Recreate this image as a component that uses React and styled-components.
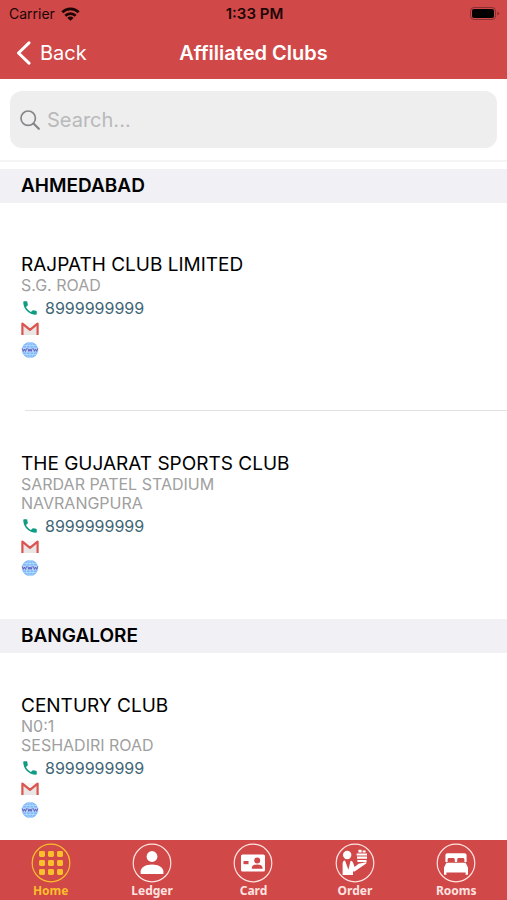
import { useState } from "react";
import styled, { createGlobalStyle } from "styled-components";

const SECTIONS = [
  {
    city: "AHMEDABAD",
    clubs: [
      {
        name: "RAJPATH CLUB LIMITED",
        address: ["S.G. ROAD"],
        phone: "8999999999"
      },
      {
        name: "THE GUJARAT SPORTS CLUB",
        address: ["SARDAR PATEL STADIUM", "NAVRANGPURA"],
        phone: "8999999999"
      }
    ]
  },
  {
    city: "BANGALORE",
    clubs: [
      {
        name: "CENTURY CLUB",
        address: ["N0:1", "SESHADIRI ROAD"],
        phone: "8999999999"
      }
    ]
  }
];

const WifiIcon = () => (
  <svg width="19" height="14" viewBox="0 0 18 14" aria-hidden="true">
    <g fill="none" stroke="#1c0606" strokeWidth="2.7">
      <path d="M0.8 5.2a11.6 11.6 0 0 1 16.4 0" />
      <path d="M3.8 8.8a7.4 7.4 0 0 1 10.4 0" />
    </g>
    <path d="M9 13.8 5.9 10.9a4.4 4.4 0 0 1 6.2 0z" fill="#1c0606" />
  </svg>
);

const BatteryIcon = () => (
  <svg width="30" height="14" viewBox="0 0 30 14" aria-hidden="true">
    <rect
      x="0.5"
      y="0.5"
      width="25"
      height="12"
      rx="3.5"
      fill="none"
      stroke="#8c2f30"
    />
    <rect x="2" y="2" width="22" height="9" rx="2" fill="#000" />
    <path d="M27.2 4.5v4q2-.8 2-2t-2-2z" fill="#8c2f30" />
  </svg>
);

const BackIcon = () => (
  <svg width="15" height="24" viewBox="0 0 15 24" aria-hidden="true">
    <path
      d="M13 1.8 2.5 12 13 22.2"
      fill="none"
      stroke="#fff"
      strokeWidth="3"
      strokeLinecap="round"
      strokeLinejoin="round"
    />
  </svg>
);

const SearchIcon = () => (
  <svg width="20" height="20" viewBox="0 0 20 20" aria-hidden="true">
    <g fill="none" stroke="#85858a" strokeWidth="1.7" strokeLinecap="round">
      <circle cx="8.2" cy="8.2" r="7.2" />
      <path d="m13.5 13.5 5.3 5.3" strokeWidth="2.2" />
    </g>
  </svg>
);

const PhoneIcon = () => (
  <svg width="18" height="18" viewBox="0 0 24 24" aria-hidden="true">
    <path
      d="M6.62 10.79c1.44 2.83 3.76 5.14 6.59 6.59l2.2-2.2c.27-.27.67-.36 1.02-.24 1.12.37 2.33.57 3.57.57.55 0 1 .45 1 1V20c0 .55-.45 1-1 1C10.61 21 3 13.39 3 4c0-.55.45-1 1-1h3.5c.55 0 1 .45 1 1 0 1.25.2 2.45.57 3.57.11.35.03.74-.25 1.02z"
      fill="#0e9c82"
    />
  </svg>
);

const MailIcon = () => (
  <svg width="18" height="14" viewBox="0 0 18 14" aria-hidden="true">
    <path d="M1 1h16v12H1z" fill="#e9e7e6" />
    <path d="M2.5 1h13L9 6.6z" fill="#f8f6f6" />
    <path
      d="M1.4 13V1.6L9 7.8l7.6-6.2V13"
      fill="none"
      stroke="#dc5450"
      strokeWidth="2.2"
      strokeLinejoin="round"
    />
  </svg>
);

const WebIcon = () => (
  <svg width="18" height="18" viewBox="0 0 18 18" aria-hidden="true">
    <circle cx="9" cy="9" r="8" fill="#78b7fa" />
    <g fill="none" stroke="#c5e2ff" strokeWidth="0.7">
      <ellipse cx="9" cy="9" rx="3.8" ry="8" />
      <path d="M9 1v16M2.4 4.4h13.2M2.4 13.6h13.2" />
    </g>
    <path d="M0.8 6.5h16.4v5H0.8z" fill="#b4d3fb" />
    <path
      d="m1.2 7.4 1.1 3 1.1-2.4 1.1 2.4 1.1-3M6.8 7.4l1.1 3L9 8l1.1 2.4 1.1-3M12.4 7.4l1.1 3 1.1-2.4 1.1 2.4 1.1-3"
      fill="none"
      stroke="#5b5fbd"
      strokeWidth="1"
    />
  </svg>
);

const HomeGlyph = () => (
  <g fill="#fcbf2c">
    {[12, 21, 30].map((y) =>
      [12, 21, 30].map((x) => (
        <rect key={`${x}-${y}`} x={x - 4} y={y - 4} width="6" height="6" rx="1.4" />
      ))
    )}
  </g>
);

const LedgerGlyph = () => (
  <g fill="#fff">
    <circle cx="20" cy="13.5" r="5.4" />
    <path d="M8.6 31v-2.4c0-4.2 5.2-7 11.4-7s11.4 2.8 11.4 7V31z" />
  </g>
);

const CardGlyph = () => (
  <g>
    <rect x="8" y="11.5" width="24" height="17" rx="1.6" fill="#fff" />
    <g fill="#d04848">
      <rect x="10.5" y="18" width="5" height="3.2" />
      <circle cx="24.2" cy="17.4" r="3" />
      <path d="M18.8 25.8v-1c0-2.2 2.4-3.4 5.4-3.4s5.4 1.2 5.4 3.4v1z" />
    </g>
  </g>
);

const OrderGlyph = () => (
  <g fill="#fff">
    <circle cx="12.2" cy="12" r="4.2" />
    <path d="M7.6 32V20.4c0-1.8 1-2.8 2.4-2.9l3.4 9.2 2.2-9c1.4.2 2.2 1 2.6 2.2l1.4 4 4-3.2 7.4-1.4c.6 0 .8.8.2 1.2L19.6 28.4c-.6.4-1.2.2-1.6-.4V32z" />
    <path d="M22.4 17h9.2v2h-9.2zM22 13.6h10v2.2H22zM21.6 10.4h10.4v2.2H21.6zM23.4 6.8h3.2v2.6h-3.2zM27.6 7.6h3v1.8h-3z" />
  </g>
);

const RoomsGlyph = () => (
  <g fill="#fff">
    <path d="M9.4 19v-6.6c0-1.4.8-2.2 2.2-2.2h16.8c1.4 0 2.2.8 2.2 2.2V19h-2.2v-2.4c0-1-.6-1.6-1.6-1.6h-4c-1 0-1.6.6-1.6 1.6V19h-2.4v-2.4c0-1-.6-1.6-1.6-1.6h-4c-1 0-1.6.6-1.6 1.6V19z" />
    <path d="M10.4 19.8h19.2l2.4 4.8v7.2h-2.4v-2.2H10.4v2.2H8v-7.2z" />
  </g>
);

const TABS = [
  { label: "Home", Glyph: HomeGlyph },
  { label: "Ledger", Glyph: LedgerGlyph },
  { label: "Card", Glyph: CardGlyph },
  { label: "Order", Glyph: OrderGlyph },
  { label: "Rooms", Glyph: RoomsGlyph }
];

const App = () => {
  const [keyword, setKeyword] = useState("");
  const [tab, setTab] = useState("Home");

  const sections = SECTIONS.map((section) => ({
    ...section,
    clubs: section.clubs.filter(({ name }) =>
      name.toLowerCase().includes(keyword.toLowerCase())
    )
  })).filter(({ clubs }) => clubs.length > 0);

  return (
    <Screen>
      <GlobalStyle />
      <Header>
        <StatusBar>
          <Carrier>
            Carrier
            <WifiIcon />
          </Carrier>
          <Time>1:33 PM</Time>
          <Battery>
            <BatteryIcon />
          </Battery>
        </StatusBar>
        <NavBar>
          <BackButton type="button">
            <BackIcon />
            Back
          </BackButton>
          <Title>Affiliated Clubs</Title>
        </NavBar>
      </Header>

      <SearchPanel>
        <SearchBox>
          <SearchIcon />
          <SearchInput
            type="text"
            aria-label="Search clubs"
            placeholder="Search..."
            value={keyword}
            onChange={(e) => setKeyword(e.target.value)}
          />
        </SearchBox>
      </SearchPanel>

      <ClubList>
        {sections.map(({ city, clubs }) => (
          <section key={city}>
            <City>{city}</City>
            {clubs.map((club) => (
              <Club key={club.name}>
                <ClubName>{club.name}</ClubName>
                {club.address.map((line) => (
                  <Address key={line}>{line}</Address>
                ))}
                <Contacts>
                  <ContactLink href={`tel:${club.phone}`}>
                    <PhoneIcon />
                    {club.phone}
                  </ContactLink>
                  <ContactLink href="#mail" aria-label="Email">
                    <MailIcon />
                  </ContactLink>
                  <ContactLink href="#web" aria-label="Website">
                    <WebIcon />
                  </ContactLink>
                </Contacts>
              </Club>
            ))}
          </section>
        ))}
      </ClubList>

      <TabBar>
        {TABS.map(({ label, Glyph }) => (
          <TabButton
            key={label}
            type="button"
            $active={tab === label}
            onClick={() => setTab(label)}
          >
            <svg width="40" height="40" viewBox="0 0 40 40" aria-hidden="true">
              <circle
                cx="20"
                cy="20"
                r="18.8"
                fill="none"
                stroke="currentColor"
                strokeWidth="1.2"
              />
              <Glyph />
            </svg>
            {label}
          </TabButton>
        ))}
      </TabBar>
    </Screen>
  );
};

export default App;

const GlobalStyle = createGlobalStyle`
  * {
    box-sizing: border-box;
  }
  body {
    margin: 0;
    background-color: #fff;
    font-family: Inter, "Liberation Sans", sans-serif;
  }
  svg {
    display: block;
    flex-shrink: 0;
  }
`;

const Screen = styled.div`
  display: flex;
  flex-direction: column;
  height: 100vh;
`;

const Header = styled.header`
  background-color: #d04848;
`;

const StatusBar = styled.div`
  display: grid;
  grid-template-columns: 1fr auto 1fr;
  align-items: center;
  height: 27px;
  padding: 0 7px 0 9px;
  color: #1c0606;
  font-size: 14px;
`;

const Carrier = styled.div`
  display: flex;
  align-items: center;
  gap: 6px;
`;

const Time = styled.div`
  font-size: 15px;
  font-weight: 600;
`;

const Battery = styled.div`
  display: flex;
  justify-content: flex-end;
`;

const NavBar = styled.div`
  display: grid;
  grid-template-columns: 1fr auto 1fr;
  align-items: center;
  height: 52px;
  padding: 0 16px;
  color: #fff;
`;

const BackButton = styled.button`
  display: flex;
  align-items: center;
  justify-self: start;
  gap: 9px;
  padding: 0;
  border: none;
  background: none;
  color: inherit;
  font-family: inherit;
  font-size: 20px;
  cursor: pointer;
`;

const Title = styled.h1`
  margin: 0;
  font-size: 20px;
  font-weight: 600;
`;

const SearchPanel = styled.div`
  padding: 12px 10px;
  border-bottom: 2px solid #f5f5f5;
`;

const SearchBox = styled.label`
  display: flex;
  align-items: center;
  gap: 7px;
  height: 57px;
  padding: 0 10px;
  border-radius: 12px;
  background-color: #eeeeee;
`;

const SearchInput = styled.input`
  flex: 1;
  min-width: 0;
  padding: 0;
  border: none;
  outline: none;
  background: none;
  color: #000;
  font-family: inherit;
  font-size: 20px;

  &::placeholder {
    color: #b9b9bb;
    opacity: 1;
  }
`;

const ClubList = styled.main`
  flex: 1;
  min-height: 0;
  padding-top: 7px;
  overflow-y: auto;
  scrollbar-width: none;
`;

const City = styled.h2`
  margin: 0;
  padding: 0 21px;
  background-color: #f0f0f5;
  font-size: 19px;
  font-weight: 600;
  line-height: 34px;
`;

const Club = styled.article`
  display: flex;
  flex-direction: column;
  align-items: flex-start;
  justify-content: center;
  min-height: 208px;
  padding: 0 21px;

  &:not(:last-child) {
    border-bottom: 1px solid;
    border-image: linear-gradient(to right, transparent 26px, #e2e2e2 26px) 1;
  }
`;

const ClubName = styled.h3`
  margin: 0;
  font-size: 19px;
  font-weight: 400;
  line-height: 23px;
`;

const Address = styled.p`
  margin: 0;
  color: #a0a0a0;
  font-size: 16px;
  line-height: 19px;
`;

const Contacts = styled.div`
  display: flex;
  flex-direction: column;
  align-items: flex-start;
  padding-top: 2px;
`;

const ContactLink = styled.a`
  display: flex;
  align-items: center;
  gap: 6px;
  height: 21px;
  color: #3f6675;
  font-size: 16px;
  text-decoration: none;
`;

const TabBar = styled.nav`
  display: grid;
  grid-template-columns: repeat(5, 1fr);
  height: 60px;
  background-color: #d04848;
`;

const TabButton = styled.button`
  display: flex;
  flex-direction: column;
  align-items: center;
  padding: 3px 0 0;
  border: none;
  background: none;
  color: ${({ $active }) => ($active ? "#fcbf2c" : "#ffe3e0")};
  font-family: "Noto Sans", sans-serif;
  font-size: 12px;
  font-weight: 700;
  line-height: 16px;
  cursor: pointer;
`;
